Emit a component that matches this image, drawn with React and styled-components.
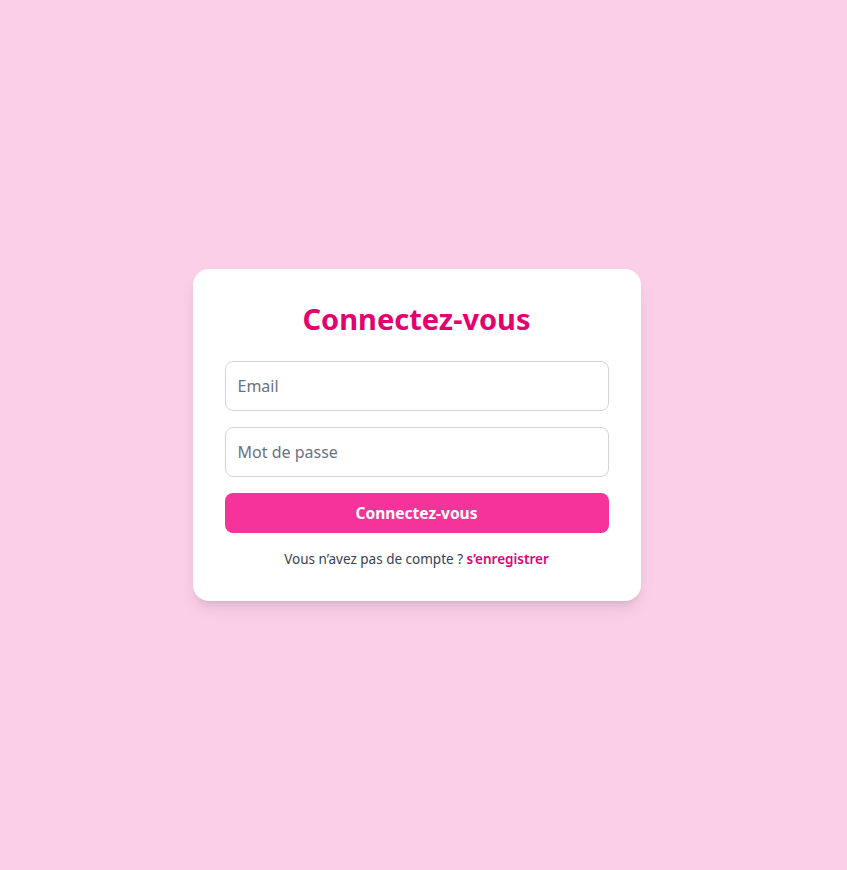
import React from "react";
import styled, { createGlobalStyle } from "styled-components";

const GlobalStyle = createGlobalStyle`
  * { box-sizing: border-box; }
  html, body { margin: 0; padding: 0; }
  body {
    background: #fbcfe8;
    font-family: "Noto Sans", "Open Sans", sans-serif;
  }
`;

const Page = styled.div`
  min-height: 870px;
  padding-right: 14px;
  display: flex;
  align-items: center;
  justify-content: center;
`;

const Card = styled.form`
  width: 448px;
  background: #ffffff;
  border-radius: 16px;
  padding: 32px;
  box-shadow: 0 10px 15px -3px rgba(0, 0, 0, 0.1), 0 4px 6px -4px rgba(0, 0, 0, 0.1);
  display: flex;
  flex-direction: column;
`;

const Title = styled.h1`
  margin: 0 0 24px;
  text-align: center;
  font-size: 29px;
  line-height: 36px;
  font-weight: 700;
  color: #e5006f;
`;

const Input = styled.input`
  width: 100%;
  height: 50px;
  padding: 12px;
  margin-bottom: 16px;
  border: 1px solid #d1d5db;
  border-radius: 8px;
  font-family: inherit;
  font-size: 16px;
  color: #111827;
  outline: none;
  &::placeholder { color: #6b7280; }
`;

const Button = styled.button`
  height: 40px;
  border: none;
  border-radius: 8px;
  background: #f6339a;
  color: #ffffff;
  font-family: inherit;
  font-size: 15.5px;
  font-weight: 700;
  cursor: pointer;
`;

const Footer = styled.p`
  margin: 16px 0 0;
  text-align: center;
  font-size: 13.5px;
  line-height: 20px;
  color: #364153;
`;

const Link = styled.a`
  color: #e6007a;
  font-weight: 600;
  text-decoration: none;
`;

export default function App() {
  return (
    <>
      <GlobalStyle />
      <Page>
        <Card onSubmit={(e) => e.preventDefault()}>
          <Title>Connectez-vous</Title>
          <Input type="email" placeholder="Email" />
          <Input type="password" placeholder="Mot de passe" />
          <Button type="submit">Connectez-vous</Button>
          <Footer>
            Vous n’avez pas de compte ? <Link href="#">s’enregistrer</Link>
          </Footer>
        </Card>
      </Page>
    </>
  );
}
